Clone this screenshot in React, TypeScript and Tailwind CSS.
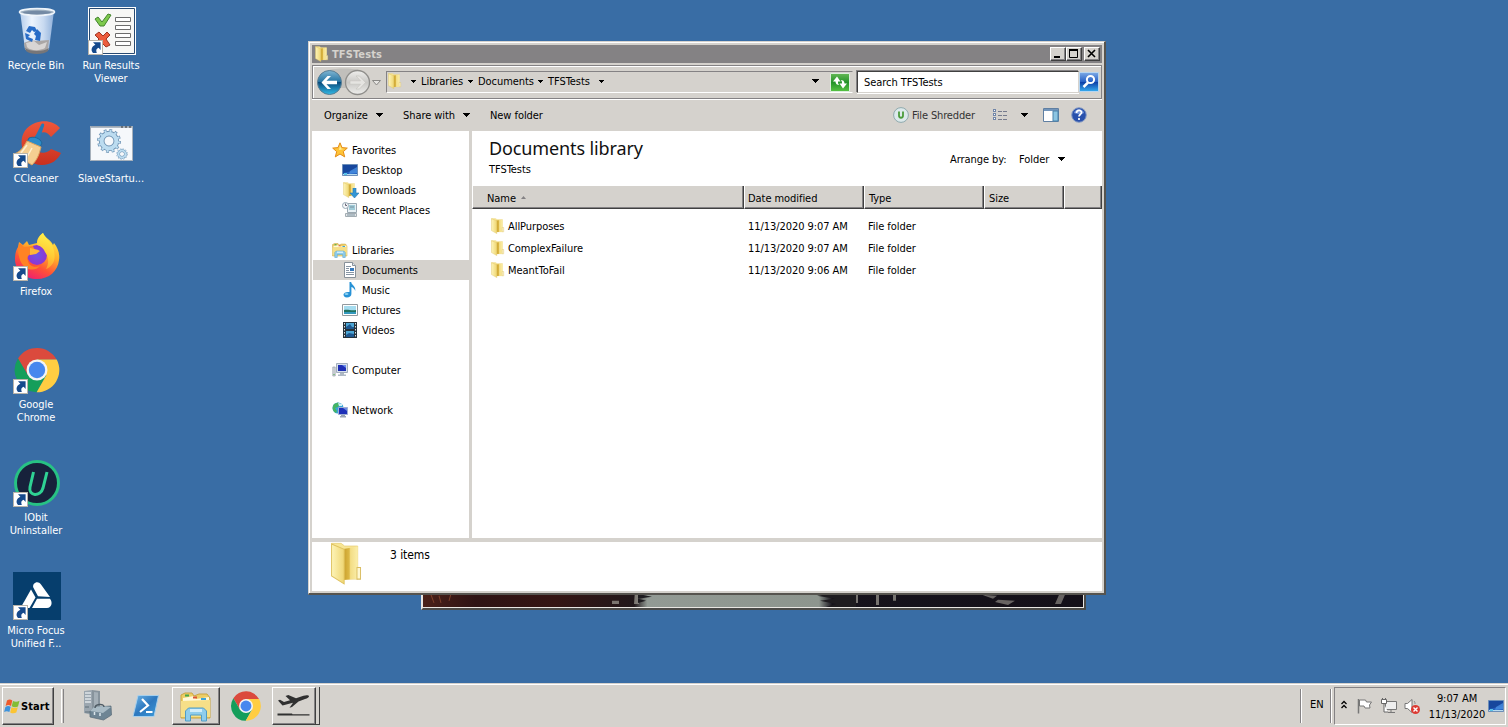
import React from "react";

type P = { className?: string };

const Caret = ({ className = "" }: P) => (
  <svg viewBox="0 0 7 4" className={"shrink-0 " + className} shapeRendering="crispEdges">
    <path d="M0 0h7L3.5 4z" fill="#000" />
  </svg>
);

const Shortcut = () => (
  <svg viewBox="0 0 15 15" className="absolute bottom-0 left-0 size-[15px]">
    <rect x=".5" y=".5" width="14" height="14" fill="#fff" stroke="#b9b4aa" />
    <path d="M5 2.300h7.600v7.600L10.600 7.800C8.500 8.500 7.600 10.200 8.800 13H5C2.400 10 3.600 6.600 7.400 4.800z" fill="#164a8c" />
  </svg>
);

const Folder = ({ className = "size-4" }: P) => (
  <svg viewBox="0 0 16 16" preserveAspectRatio="none" className={"shrink-0 " + className}>
    <defs>
      <linearGradient id="fa" x1="0" x2="1" y1="0" y2="0"><stop offset="0" stopColor="#fdf4b8" /><stop offset="1" stopColor="#efd673" /></linearGradient>
      <linearGradient id="fb" x1="0" x2="1" y1="0" y2="0"><stop offset="0" stopColor="#c99f2c" /><stop offset=".4" stopColor="#dcb845" /><stop offset=".5" stopColor="#f3dd85" /><stop offset="1" stopColor="#fbeea9" /></linearGradient>
    </defs>
    <path d="M1.500.500h4L7 1.500h5.500v12.300H5z" fill="#f8e695" stroke="#e6cd76" strokeWidth=".3" />
    <path d="M6.500 2.600l6-.9v12l-6 .4z" fill="url(#fb)" />
    <path d="M1.500.700L6.800 2.700v12.900L1.500 12.600z" fill="url(#fa)" stroke="#dfc25f" strokeWidth=".4" />
    <path d="M12.200 9.500h1.500v4.300h-1.500z" fill="#fff8d0" stroke="#d9bd61" strokeWidth=".4" />
  </svg>
);

const RecycleBin = () => (
  <svg viewBox="0 0 48 48" className="size-12">
    <defs><linearGradient id="rb" x1="0" x2="1"><stop offset="0" stopColor="#b4cdec" /><stop offset=".35" stopColor="#edf4fd" /><stop offset=".7" stopColor="#c7d9f0" /><stop offset="1" stopColor="#8fb0da" /></linearGradient></defs>
    <path d="M7 4l5 38c4 5 20 5 24 0L41 4z" fill="url(#rb)" />
    <path d="M11 36c4-2 8-3 12-2l13-1-1 9c-4 5-19 5-23 0z" fill="#aaa6a5" />
    <path d="M13 36l8-2 5 4 8-3-2 6c-5 3-15 3-18-1z" fill="#d8d5d4" />
    <path d="M12 41c5 4 19 4 24 0l-1 3c-4 4-18 4-22 0z" fill="#777678" />
    <ellipse cx="24" cy="5" rx="17.500" ry="3.400" fill="#9caebf" stroke="#eef4fa" strokeWidth="1.600" />
    <ellipse cx="24" cy="5.600" rx="14" ry="1.800" fill="#748aa4" />
    <g fill="#286cc7"><path d="M13 24l3-5 6 1 2 4-3 1-2-2-2 3z" /><path d="M24 22l4 4-1 8-5-1 1-4-2-2z" /><path d="M12 26l5 2-2 2 5 2-1 3-6-3z" /></g>
  </svg>
);

const RunResults = () => (
  <svg viewBox="0 0 48 48" className="size-12">
    <rect x=".5" y=".5" width="47" height="47" fill="#f7f7f5" stroke="#fff" />
    <path d="M1.500 46.500V1.500h45v45z" fill="none" stroke="#284a72" />
    <path d="M7 12l3-2 4 5 6-8 3 1-7 11h-4z" fill="#7dc94c" stroke="#44842e" />
    <path d="M7 28l4-3 4 4 4-4 3 3-4 4 4 6-4 2-4-4-4 3-3-3 4-4z" fill="#ec5c3c" stroke="#9d3422" />
    <g fill="#fff" stroke="#6c6c6c"><path d="M27.500 10.500h15v4h-15zM27.500 18.500h15v4h-15zM27.500 26.500h15v4h-15zM27.500 34.500h15v4h-15z" /></g>
  </svg>
);

const CCleaner = () => (
  <svg viewBox="0 0 48 48" className="size-12">
    <defs><linearGradient id="cc" x1="0" x2="0" y1="0" y2="1"><stop offset="0" stopColor="#f0573a" /><stop offset="1" stopColor="#c8301f" /></linearGradient></defs>
    <path d="M47 8C41 1 31-.5 22 3 12 7 7 16 9 27c1 10 9 18 20 18 9 0 16-5 19-12l-10-4c-4 5-12 5-16 0-4-6-2-14 5-16 5-2 8 0 11 4z" fill="url(#cc)" />
    <path d="M28 5c1-2 4-2 3 1l-5 15-5-2z" fill="#2878b5" />
    <path d="M16 18c5-2 11 0 13 5l-2 4-13-5z" fill="#2d8bc8" stroke="#1e6799" />
    <path d="M14 21l14 6c-2 8-4 13-9 18L1 34c6-2 9-6 13-13z" fill="#f5ce91" stroke="#dda45e" />
    <path d="M8 33l6-8M14 37l5-9" stroke="#fff0cf" strokeWidth="1.500" />
  </svg>
);

const Gear = ({ x, y, s }: { x: number; y: number; s: number }) => (
  <g transform={`translate(${x} ${y}) scale(${s})`}>
    <circle r="10" fill="none" stroke="#6e93b4" strokeWidth="4.400" strokeDasharray="2.618 2.618" />
    <circle r="7.500" fill="none" stroke="#6a8fb0" strokeWidth="5.800" />
    <circle r="7.500" fill="none" stroke="#bcdcf0" strokeWidth="4" />
    <circle r="10" fill="none" stroke="#bcdcf0" strokeWidth="2.800" strokeDasharray="1.900 3.336" strokeDashoffset="-.36" />
  </g>
);

const Script = () => (
  <svg viewBox="0 0 48 48" className="size-12">
    <rect x="2.500" y="6.500" width="42" height="34" fill="#f6f8fb" stroke="#a6b0bb" />
    <path d="M3 7h41" stroke="#98a4b0" strokeWidth="1.500" />
    <path d="M33 7h2M37 7h2M41 7h2" stroke="#333" />
    <Gear x={21} y={21} s={0.980} />
    <Gear x={34} y={34} s={0.460} />
  </svg>
);

const Firefox = () => (
  <svg viewBox="0 0 48 48" className="size-12">
    <defs>
      <linearGradient id="ff" x1=".8" x2=".3" y1="0" y2="1"><stop offset="0" stopColor="#fff04a" /><stop offset=".4" stopColor="#ffae2b" /><stop offset=".7" stopColor="#ff5336" /><stop offset="1" stopColor="#ef1c72" /></linearGradient>
      <linearGradient id="fy" x1=".6" x2=".4" y1="0" y2="1"><stop offset="0" stopColor="#fff34c" /><stop offset=".6" stopColor="#ffc934" /><stop offset="1" stopColor="#ff9a2e" /></linearGradient>
      <radialGradient id="fp"><stop offset="0" stopColor="#6a55e8" /><stop offset="1" stopColor="#9035d0" /></radialGradient>
    </defs>
    <path d="M24 10c0-5 3-8 6-10 2 5 8 7 10 12l1-2c4 5 6 11 5 17-1 11-10 19-22 19S2 38 2 26c0-5 1-9 3-12l1-5 4 3 4-4 2 4z" fill="url(#ff)" />
    <circle cx="24" cy="22" r="10" fill="url(#fp)" />
    <path d="M7 10l4 4 9-1c1 3 2 4 5 5l-1 2-8 2c-2 2-2 4-1 6 1 5 7 7 12 5-6 7-17 3-20-6-2-6-3-12 0-17z" fill="#ff8324" />
    <path d="M17 15c3 1 7 1 10 3l-4 3-6 1z" fill="#ffb637" />
    <path d="M24 12c0-5 2-9 6-12 2 6 10 9 11 18 2 9-1 15-8 18 3-5 3-12-1-17-1-3-4-6-8-7z" fill="url(#fy)" />
  </svg>
);

const Chrome = ({ className = "size-12" }: P) => (
  <svg viewBox="0 0 48 48" className={className}>
    <g transform="translate(24 24)">
      <path d="M0-10.500H19.500A22.300 22.300 0 0 0-19-11.600L-9.100 5.200z" fill="#db4a3d" />
      <path d="M-9.100 5.200L-19-11.600A22.300 22.300 0 0 0-.4 22.300L9.500 5z" fill="#159e5b" />
      <path d="M0-10.500H19.700A22.300 22.300 0 0 1-.4 22.300L9.300 5.300z" fill="#ffcd42" />
      <circle r="10.500" fill="#f4f4f4" /><circle r="8.200" fill="#4787ee" />
    </g>
  </svg>
);

const IObit = () => (
  <svg viewBox="0 0 48 48" className="size-12">
    <circle cx="24" cy="24" r="21.500" fill="#17223b" stroke="#27c284" strokeWidth="3" />
    <path d="M20.500 13L17 28C15 37.500 27.500 38 30 29L34 13" fill="none" stroke="#2fd394" strokeWidth="3" />
  </svg>
);

const MicroFocus = () => (
  <svg viewBox="0 0 48 48" className="size-12">
    <path fill="#063e6d" d="M0 0h48v48H0z" />
    <path d="M20.300 15.500c-1.300-4.500 4.700-7.500 7.700-3L37 25l-12-.8z" fill="#fff" />
    <path d="M18 17.500L22.500 25.500L16.500 36H7.500z" fill="#fff" />
    <path d="M24 26.800h13c3 3.700 1.500 9.200-3 9.200H19z" fill="#fff" />
  </svg>
);

const Star = () => <svg viewBox="0 0 16 16" className="size-4"><path d="M8 .8l2 4.800 5.300.5-4 3.500 1.400 5.300L8 12l-4.700 2.900 1.400-5.300-4-3.500L6 5.600z" fill="#ffc437" stroke="#e38c18" /><path d="M8 3l1 3.500 3 .4-5 1z" fill="#fff09a" /></svg>;
const DesktopIc = ({ className = "size-4" }: P) => <svg viewBox="0 0 16 16" className={className}><path d="M.5 2.500h15v11H.500z" fill="#2560bd" stroke="#6d8fb8" /><path d="M1 3h14v5L1 11z" fill="#17479d" /><path d="M8 9l7-4v6l-8 1z" fill="#488ee1" opacity=".8" /><path d="M1 12.500h14" stroke="#b9dbef" /><path d="M2 11h3v2H2z" fill="#59c2e8" /></svg>;
const Downloads = () => <div className="relative size-4"><Folder /><svg viewBox="0 0 9 10" className="absolute -right-px bottom-0 h-[10px] w-[9px]"><path d="M3 0h3v5h3L4.500 10 0 5h3z" fill="#3296d6" stroke="#2878b5" strokeWidth=".6" /></svg></div>;
const Recent = () => <svg viewBox="0 0 16 16" className="size-4"><path d="M5.500 1.500h9v9h-9z" fill="#e8f1f5" stroke="#9aa8b1" /><path d="M7 3h6v5H7z" fill="#9fcbd8" /><path d="M3.500 11.500h11v3h-11z" fill="#e4e6e7" stroke="#a3adb3" /><path d="M5 13h8M8 5h4" stroke="#7891a0" /><circle cx="3.500" cy="3.500" r="3" fill="#f4f6f8" stroke="#9aabb8" /><path d="M3.500 1.500v2H5" stroke="#667" fill="none" /></svg>;
const Libraries = ({ className = "size-4" }: P) => (
  <svg viewBox="0 0 32 32" className={className}>
    <path d="M1 5l4-2h7l2 3 5-2h8l3 4v20H1z" fill="#eccd65" stroke="#c9a543" />
    <path d="M3 8l11-2 2 3 13-2v4H3z" fill="#fff8d8" />
    <path d="M5 4.500h4v2H5z" fill="#43a64b" /><path d="M13 6.500h4v2h-4z" fill="#d95436" /><path d="M21 8h5v2h-5z" fill="#3da5d9" />
    <path d="M1 11l29-1v17H1z" fill="#f6df88" />
    <path d="M5.500 31V21l3-3h15l3 3v10h-5v-6h-11v6z" fill="#8fcdec" stroke="#519dc6" /><path d="M10 19h12v3H10z" fill="#d1edfa" />
  </svg>
);
const Doc = () => <svg viewBox="0 0 16 16" className="size-4"><path d="M2.500.5h8l3 3v12h-11z" fill="#fff" stroke="#889199" /><path d="M10.500.5v3h3" fill="#dfe8ef" stroke="#889199" /><path d="M4 4.500h5M4 6.500h3M4 8.500h3M4 10.500h8M4 12.500h8" stroke="#8795a3" /><path d="M8 6h4v3H8z" fill="#3779bb" /></svg>;
const Music = () => <svg viewBox="0 0 16 16" className="size-4"><path d="M7.500 0h1.700c0 3 5 4 4 9-.6-2-2-3.500-3.800-4v7c0 2-2 3.500-4.500 3.500S1.500 14 1.500 12.500 4 9.500 7.500 10z" fill="#2792d6" /><ellipse cx="4.500" cy="12" rx="2" ry="1" fill="#8dd2f2" /></svg>;
const Pictures = () => <svg viewBox="0 0 16 16" className="size-4"><path d="M.5 2.500h15v11H.500z" fill="#fff" stroke="#929a9f" /><path d="M2 4h12v8H2z" fill="#a5dcef" /><path d="M2 8c4-1 7 1 12 0v3H2z" fill="#20715f" /><path d="M2 10h12v2H2z" fill="#3399bd" /></svg>;
const Videos = () => <svg viewBox="0 0 16 16" className="size-4"><path d="M1 0h14v16H1z" fill="#25323b" /><path d="M4 1h8v6H4zM4 9h8v6H4z" fill="#4ba6d6" /><path d="M4 5l4-3 2 3h2v2H4zM4 13l3-2 5 1v3H4z" fill="#1e5890" /><path d="M2.500 1v14M13.500 1v14" stroke="#dce2e5" strokeDasharray="1.500 1.500" /></svg>;
const Computer = () => <svg viewBox="0 0 16 16" className="size-4"><path d="M4.500 1.500h11v9h-11z" fill="#d7e0ec" stroke="#a2adbc" /><path d="M6 3h8v6H6z" fill="#1f2fb5" /><path d="M10 3h4v3z" fill="#6b8dec" /><path d="M8 11h4v1.500h2V14H6v-1.500h2z" fill="#afb9c5" /><path d="M.8 5h2.400v9H.8z" fill="#d2d6dc" stroke="#8b929c" strokeWidth=".6" /><path d="M1.500 12h1v1h-1z" fill="#4ab446" /></svg>;
const Network = () => <svg viewBox="0 0 16 16" className="size-4"><circle cx="6" cy="6" r="5.500" fill="#36a4d8" /><path d="M2 2l4-1.500L8 2 6 5 3 6 5 9l-1 2C0 9 0 5 2 2z" fill="#45b463" /><path d="M6 1l4 1v2H7z" fill="#d4f0f5" /><path d="M6.500 5.500h9v7h-9z" fill="#1d30b8" stroke="#9faed2" /><path d="M11 6h4v3z" fill="#698ae4" /><path d="M9 13h4v1h1v1.500H8V14h1z" fill="#9aa5b4" /></svg>;

const ServerManager = () => (
  <svg viewBox="0 0 32 32" className="size-8">
    <path d="M2 1l8-1v25l-8-2z" fill="#9ba6af" /><path d="M10 0l8 1v23l-8 2z" fill="#87939c" /><path d="M12 2l4 .5v19l-4 1z" fill="#a4afb7" />
    <path d="M3 3h6M3 6h6M3 9h6M3 12h6" stroke="#dfe5e9" strokeWidth="1.400" /><path d="M3 17h4M3 22h5" stroke="#5f6e79" />
    <path d="M8 21l6-4 15-1 .5 9-8 5L8 27z" fill="#6e8594" stroke="#586a77" strokeWidth=".7" /><path d="M8 21l13 2 8-6-9-1-8 1z" fill="#a9bbc5" />
    <path d="M13 18c0-4 9-5 9-1" fill="none" stroke="#4f5c65" strokeWidth="1.500" /><path d="M12.500 22v3M18 23v3" stroke="#dce6eb" strokeWidth="1.500" />
  </svg>
);
const PowerShell = () => (
  <svg viewBox="0 0 28 24" className="h-6 w-7">
    <defs><linearGradient id="ps" x1="0" x2="1" y1="0" y2="1"><stop offset="0" stopColor="#6eb5e7" /><stop offset=".5" stopColor="#2d78bf" /><stop offset="1" stopColor="#3d9bd9" /></linearGradient></defs>
    <path d="M6 1.500h20.500L22 22.500H1z" fill="url(#ps)" stroke="#a6cfec" strokeLinejoin="round" />
    <path d="M10 5l6 6.500L8 18M14 18h6.500" fill="none" stroke="#fff" strokeWidth="2.200" />
  </svg>
);
const Plane = () => (
  <svg viewBox="0 0 34 26" className="h-[26px] w-[34px]" fill="#303030">
    <path d="M1 7.500l2-.7 4 2.200 6-1.800L8.500 3l2.800-1L19 5.300l7.500-2.500c3-1 5.500-.5 5.500.5s-1.500 2-4 2.800L21.500 8.500 15 14l-2.500.7 3.500-5L5.500 12.500z" />
    <path d="M.5 20.500h14.500l.5.800h17v1.200H.5z" />
  </svg>
);
const WinFlag = () => (
  <svg viewBox="0 0 16 15" className="h-[15px] w-4 shrink-0">
    <path d="M3 1.500c2-1.300 3.500-1.300 5.300 0L7 7C5 5.700 3.600 5.800 1.600 7z" fill="#ee5a2b" /><path d="M9 2c2 1 4.500 1 6.500-.3L14 7.400c-2 1-4 1-6.300-.1z" fill="#83bd35" />
    <path d="M1.400 7.900c2-1.300 3.500-1.300 5.300-.1l-1.300 5.300c-2-1.200-3.400-1.200-5.300 0z" fill="#3e93dc" /><path d="M7.500 8.200c2 1 4.300 1 6.300 0l-1.500 5.300c-2 1-4 1-6.100-.1z" fill="#fbc433" />
  </svg>
);

const Desk = ({ icon, label, shortcut = true }: { icon: React.ReactNode; label: string[]; shortcut?: boolean }) => (
  <div className="flex h-[113px] w-[74px] flex-col items-center pt-[7px]">
    <div className="relative size-12">{icon}{shortcut && <Shortcut />}</div>
    <div className="mt-[4px] mr-[2px] flex flex-col items-center leading-[13px] whitespace-nowrap text-white">
      {label.map((l) => <span key={l}>{l}</span>)}
    </div>
  </div>
);

const Nav = ({ icon, text, sub, active }: { icon: React.ReactNode; text: string; sub?: boolean; active?: boolean }) => (
  <div className={"ml-px flex h-5 items-center gap-1 " + (sub ? "pl-[29px] " : "pl-[19px] ") + (active ? "bg-[#d5d2cd]" : "")}>
    {icon}<span>{text}</span>
  </div>
);

const Col = ({ w, children }: { w: string; children?: React.ReactNode }) => (
  <div className={"flex h-[23px] items-center border-r border-b border-l border-r-[#404040] border-b-[#404040] border-l-white bg-[#d5d2cd] pt-[2px] shadow-[inset_-1px_-1px_0_#848284] " + w}>{children}</div>
);

const Row = ({ name, date }: { name: string; date: string }) => (
  <div className="flex h-[22px] items-center pl-[18px]">
    <Folder className="-mt-px size-4" /><span className="ml-[2px] w-[240px]">{name}</span><span className="w-[120px]">{date}</span><span>File folder</span>
  </div>
);

const WinBtn = ({ children }: { children: React.ReactNode }) => (
  <div className="flex h-[14px] w-4 items-center justify-center border border-t-white border-r-[#404040] border-b-[#404040] border-l-white bg-[#d5d2cd] shadow-[inset_-1px_-1px_0_#848284]">{children}</div>
);

const raised = "border border-t-white border-r-[#404040] border-b-[#404040] border-l-white bg-[#d5d2cd] shadow-[inset_-1px_-1px_0_#848284] ";

export default function App() {
  return (
    <div className="relative flex h-[727px] w-[1508px] flex-col overflow-hidden bg-[#396da5] font-['Tahoma','DejaVu_Sans_Condensed','DejaVu_Sans',sans-serif] text-[11px] leading-[13px] tracking-[-0.06px] whitespace-nowrap text-black font-stretch-condensed">
      <div className="grid h-[683px] grid-flow-col grid-cols-[74px_74px] grid-rows-[repeat(6,113px)] justify-start overflow-hidden">
        <Desk icon={<RecycleBin />} label={["Recycle Bin"]} shortcut={false} />
        <Desk icon={<CCleaner />} label={["CCleaner"]} />
        <Desk icon={<Firefox />} label={["Firefox"]} />
        <Desk icon={<Chrome />} label={["Google", "Chrome"]} />
        <Desk icon={<IObit />} label={["IObit", "Uninstaller"]} />
        <Desk icon={<MicroFocus />} label={["Micro Focus", "Unified F..."]} />
        <div className="translate-x-px"><Desk icon={<RunResults />} label={["Run Results", "Viewer"]} /></div>
        <div className="translate-x-px"><Desk icon={<Script />} label={["SlaveStartu..."]} shortcut={false} /></div>
      </div>

      <div className="absolute top-[560px] left-[421px] h-[50px] w-[665px] border-r-2 border-b-2 border-l-2 border-[#4a4a48] border-l-[#e8e6e2] bg-[#e8e6e2] pr-px pb-px">
        <svg viewBox="0 0 660 46" preserveAspectRatio="none" className="size-full">
          <defs>
            <linearGradient id="ph" x1="0" x2="1"><stop offset="0" stopColor="#4a2119" /><stop offset=".08" stopColor="#2e1314" /><stop offset=".2" stopColor="#351513" /><stop offset=".32" stopColor="#21181b" /><stop offset=".34" stopColor="#929a94" /><stop offset=".6" stopColor="#8d958e" /><stop offset=".62" stopColor="#16131c" /><stop offset="1" stopColor="#141019" /></linearGradient>
          </defs>
          <path d="M0 0h660v46H0z" fill="url(#ph)" />
          <path d="M212 30h4v13h-5zM189 40h7v3h-7zM433 32h2v10h-3zM453 32h3v12h-3zM470 32h3v8h-3z" fill="#98958e" opacity=".75" />
          <path d="M215 32h16l-12 2 10 2-14 2 8 2-8 2zM404 30h-8l12 3-14 2 18 3-15 2 16 3-10 3h30V30z" fill="#1e1c20" />
          <path d="M8 34l3 8M16 35l2 7M28 33l-2 7" stroke="#8b4930" strokeWidth="1" opacity=".8" />
          <path d="M559 34l15 1-4 3zM575 39l17 1-7 4-13-3zM636 34h6l-4 9h-6z" fill="#686463" />
        </svg>
      </div>

      <div className="absolute top-[41px] left-[308px] flex h-[554px] w-[798px] flex-col border-t border-r-2 border-b-2 border-l border-t-[#d5d2cd] border-r-[#56544f] border-b-[#56544f] border-l-[#d5d2cd] bg-[#d5d2cd]">
        <div className="flex h-full flex-col border-t border-l border-white p-[2px]">
          <div className="flex h-[18px] shrink-0 items-center bg-[#848284] pr-[2px] pl-[2px]">
            <Folder /><span className="ml-[2px] flex-1 font-bold tracking-[0.1px] text-[#d5d2cd]">TFSTests</span>
            <WinBtn><svg viewBox="0 0 12 10" className="h-[10px] w-3"><path d="M2 7h6v2H2z" /></svg></WinBtn>
            <WinBtn><svg viewBox="0 0 12 10" className="h-[10px] w-3"><path d="M1.500.500h8v8h-8z" fill="none" stroke="#000" /><path d="M1 0h9v2H1z" /></svg></WinBtn>
            <div className="ml-[2px]"><WinBtn><svg viewBox="0 0 12 10" className="h-[10px] w-3"><path d="M2 1l7 7M9 1L2 8" stroke="#000" strokeWidth="1.600" /></svg></WinBtn></div>
          </div>

          <div className="mt-[2px] flex h-[34px] shrink-0 items-center border border-[#848284] shadow-[0_1px_0_#fff,inset_0_1px_0_#fff,inset_1px_0_0_#fff]">
            <svg viewBox="0 0 72 30" className="ml-[2px] h-[30px] w-[72px] shrink-0">
              <defs><linearGradient id="bk" x1="0" x2="0" y1="0" y2="1"><stop offset="0" stopColor="#7fb5d2" /><stop offset=".48" stopColor="#2273a3" /><stop offset=".5" stopColor="#0b4c7d" /><stop offset="1" stopColor="#31b9e6" /></linearGradient>
                <linearGradient id="fw" x1="0" x2="0" y1="0" y2="1"><stop offset="0" stopColor="#efefed" /><stop offset=".5" stopColor="#c9c8c5" /><stop offset="1" stopColor="#eeeeec" /></linearGradient></defs>
              <path d="M14 3c8-2 22-2 30 0l10 6-4 12H14z" fill="#c1bfbb" />
              <circle cx="14.500" cy="15.500" r="12" fill="url(#bk)" stroke="#587d93" />
              <path d="M12.500 9h3.500l-4.500 4.800H22v3.400H11.500L16 22h-3.500L6.500 15.500z" fill="#fff" />
              <circle cx="42.500" cy="15.500" r="12" fill="url(#fw)" stroke="#8f8e8b" strokeWidth="1.300" />
              <path d="M44.500 9H41l4.500 4.800H35v3.400h10.500L41 22h3.500l6-6.500z" fill="#e5e4e1" stroke="#c4c2be" strokeWidth=".6" />
              <path d="M57.500 13.500h8l-4 4.500z" fill="#e6e5e2" stroke="#8a8986" />
            </svg>
            <div className="-ml-px flex h-[22px] w-[467px] shrink-0 items-center border border-t-[#848284] border-r-[#d5d2cd] border-b-white border-l-[#848284] pb-[2px]">
              <Folder className="size-4" />
              <Caret className="ml-[8px] h-[3px] w-[5px]" /><span className="ml-[5px] w-[42px]">Libraries</span>
              <Caret className="ml-[5px] h-[3px] w-[5px]" /><span className="ml-[5px] w-[55px]">Documents</span>
              <Caret className="ml-[5px] h-[3px] w-[5px]" /><span className="ml-[5px] w-[46px]">TFSTests</span>
              <Caret className="ml-[5px] h-[3px] w-[5px]" />
              <Caret className="mr-[33px] ml-auto h-[4px] w-[7px]" />
            </div>
            <svg viewBox="0 0 20 19" className="-ml-[23px] h-[19px] w-5 shrink-0">
              <defs><linearGradient id="rg" x1="0" x2="0" y1="0" y2="1"><stop offset="0" stopColor="#65b956" /><stop offset=".5" stopColor="#239329" /><stop offset="1" stopColor="#58c443" /></linearGradient></defs>
              <path d="M.5.500h19v18H.500z" fill="url(#rg)" stroke="#dceedd" />
              <path d="M7 3.500L3 8.500h2.500c0 2.500 1.500 3.500 4 3.500-1.500-1-1.500-2-1.500-3.500h2.500zM13 15.500l4-5h-2.500C14.500 8 13 7 10.500 7c1.500 1 1.500 2 1.500 3.500H9.500z" fill="#fff" />
            </svg>
            <div className="ml-[7px] flex h-[22px] w-[222px] shrink-0 items-center border border-t-[#404040] border-r-[#d5d2cd] border-b-[#d5d2cd] border-l-[#404040] bg-white pl-[6px] shadow-[0_1px_0_#fff,-1px_-1px_0_#848284]">Search TFSTests</div>
            <svg viewBox="0 0 20 20" className="size-5 shrink-0">
              <defs><linearGradient id="sg" x1="0" x2="0" y1="0" y2="1"><stop offset="0" stopColor="#7daae6" /><stop offset=".48" stopColor="#2760c5" /><stop offset=".5" stopColor="#0c3ca5" /><stop offset="1" stopColor="#37adf0" /></linearGradient></defs>
              <path d="M.5.500h19v19H.500z" fill="url(#sg)" stroke="#b7d5f0" />
              <circle cx="11.500" cy="7.500" r="3.600" fill="none" stroke="#fff" strokeWidth="2" /><path d="M9 10.500L4.500 15" stroke="#fff" strokeWidth="2.500" />
            </svg>
          </div>

          <div className="flex h-8 shrink-0 items-center pl-[12px]">
            <span className="w-[52px]">Organize</span><Caret className="h-[4px] w-[7px]" />
            <span className="ml-5 w-[60px]">Share with</span><Caret className="h-[4px] w-[7px]" />
            <span className="ml-5">New folder</span>
            <div className="mr-[15px] ml-auto flex items-center">
              <svg viewBox="0 0 16 16" className="size-4"><circle cx="8" cy="8" r="7.400" fill="#dce9eb" stroke="#8fa9ad" /><path d="M6 4.500v4c0 3 4 3 4 0v-4" fill="none" stroke="#4b9b3b" strokeWidth="1.800" /></svg>
              <span className="mt-px ml-[3px] w-[80px] tracking-[-0.15px] text-[#333]">File Shredder</span>
              <svg viewBox="0 0 16 12" className="h-3 w-4" shapeRendering="crispEdges"><path d="M1.500.500h2v2h-2zM1.500 4.500h2v2h-2zM1.500 8.500h2v2h-2z" fill="#fff" stroke="#7186a8" /><path d="M6 2h4M11 2h4M6 6h4M11 6h4M6 10h4M11 10h4" stroke="#757b8c" /></svg>
              <Caret className="ml-[13px] h-[4px] w-[7px]" />
              <svg viewBox="0 0 16 14" className="ml-[15px] h-[14px] w-4"><path d="M.5.500h15v13H.500z" fill="#fff" stroke="#5f7fa2" /><path d="M1 1h14v2H1z" fill="#7295bb" /><path d="M10 3h5v10h-5z" fill="#8cc5e2" stroke="#4b82aa" /></svg>
              <svg viewBox="0 0 16 16" className="ml-[12px] size-4"><circle cx="8" cy="8" r="7.300" fill="#2951ac" stroke="#879cc4" /><path d="M3 6c1-5 9-5 10 0-3 2-7 1-10 0z" fill="#7596db" /><path d="M5.500 6c0-3.500 5-3.500 5-.5 0 2-2.500 2-2.500 4M8 11v2" fill="none" stroke="#fff" strokeWidth="1.700" /></svg>
            </div>
          </div>

          <div className="flex h-[407px] shrink-0">
            <div className="mr-[3px] w-[157px] bg-white pt-[9px]">
              <Nav icon={<Star />} text="Favorites" />
              <Nav icon={<DesktopIc />} text="Desktop" sub />
              <Nav icon={<Downloads />} text="Downloads" sub />
              <Nav icon={<Recent />} text="Recent Places" sub />
              <div className="h-5" />
              <Nav icon={<Libraries />} text="Libraries" />
              <Nav icon={<Doc />} text="Documents" sub active />
              <Nav icon={<Music />} text="Music" sub />
              <Nav icon={<Pictures />} text="Pictures" sub />
              <Nav icon={<Videos />} text="Videos" sub />
              <div className="h-5" />
              <Nav icon={<Computer />} text="Computer" />
              <div className="h-5" />
              <Nav icon={<Network />} text="Network" />
            </div>
            <div className="flex flex-1 flex-col bg-white">
              <div className="flex h-[55px] justify-between pl-[17px]">
                <div className="pt-[5px]">
                  <div className="font-['Noto_Sans',sans-serif] text-[18px] leading-6 tracking-[-0.12px] font-stretch-normal text-[#111]">Documents library</div>
                  <div className="mt-[3px]">TFSTests</div>
                </div>
                <div className="mt-[21px] mr-[37px] flex h-[13px] items-center"><span className="mt-px w-[69px]">Arrange by:</span><span className="mt-px w-[39px]">Folder</span><Caret className="h-[4px] w-[7px]" /></div>
              </div>
              <div className="flex">
                <Col w="w-[272px] pl-[14px]">Name<svg viewBox="0 0 5 3" className="mb-[2px] ml-[5px] h-[3px] w-[5px]"><path d="M0 3h5L2.500 0z" fill="#848284" /></svg></Col>
                <Col w="w-[120px] pl-[3px]">Date modified</Col>
                <Col w="w-[120px] pl-[4px]">Type</Col>
                <Col w="w-[80px] pl-[4px]">Size</Col>
                <Col w="w-[38px]" />
              </div>
              <div className="mt-[6px]">
                <Row name="AllPurposes" date="11/13/2020 9:07 AM" />
                <Row name="ComplexFailure" date="11/13/2020 9:07 AM" />
                <Row name="MeantToFail" date="11/13/2020 9:06 AM" />
              </div>
            </div>
          </div>
          <div className="mt-[4px] flex h-[49px] shrink-0 bg-white pl-[16px]">
            <Folder className="h-[43px] w-[38px]" />
            <span className="mt-[5px] ml-[24px] pt-px text-[12px] leading-[15px]">3 items</span>
          </div>
        </div>
      </div>

      <div className="z-10 flex h-11 shrink-0 items-center border-t border-[#d5d2cd] bg-[#d5d2cd] shadow-[inset_0_1px_0_#fff]">
        <div className={raised + "mt-px ml-[2px] flex h-[38px] w-[52px] items-center pl-px font-bold"}><WinFlag /><span className="ml-px tracking-[0.1px]">Start</span></div>
        <div className="ml-[7px] h-[34px] w-[3px] border-r border-l border-r-[#848284] border-l-white" />
        <div className="ml-[18px]"><ServerManager /></div>
        <div className="ml-[18px]"><PowerShell /></div>
        <div className={raised + "mt-px ml-[12px] flex h-[38px] w-12 items-center justify-center"}><Libraries className="size-8" /></div>
        <div className="ml-[10px]"><Chrome className="size-8" /></div>
        <div className={raised + "mt-px ml-[10px] flex h-[38px] w-[44px] items-center justify-center"}><Plane /></div>
        <div className="mt-px h-[38px] w-1 border-r border-b border-[#404040]" />
        <div className="ml-auto h-[34px] w-[2px] border-r border-l border-r-white border-l-[#848284]" />
        <span className="-mt-[3px] ml-[8px] w-[20px]">EN</span>
        <div className="h-[34px] w-[2px] border-r border-l border-r-white border-l-[#848284]" />
        <div className="mt-px mr-[2px] ml-[2px] flex h-[38px] w-[172px] items-center border border-t-[#848284] border-r-white border-b-white border-l-[#848284]">
          <svg viewBox="0 0 8 9" className="-mt-[4px] ml-[5px] h-[9px] w-[8px]" fill="none" stroke="#000" strokeWidth="1.300"><path d="M1.500 4L4 1.500 6.500 4M1.500 8L4 5.500 6.500 8" /></svg>
          <svg viewBox="0 0 16 16" className="ml-[9px] size-4"><path d="M1.500 1v14.500" stroke="#777" strokeWidth="1.500" /><path d="M2.500 2h6l1 2h5l-2 3 .5 3h-5l-1-2H2.500z" fill="#fff" stroke="#777" /></svg>
          <svg viewBox="0 0 16 16" className="ml-[8px] size-4"><path d="M4.500 3.500h11v8h-11z" fill="#eee" stroke="#777" /><path d="M7 14.500h7M10 12v2" stroke="#777" /><path d="M.5 1.500h5v4h-5zM3 6v8h4" fill="#fff" stroke="#666" /><path d="M1.500 0v2M4.500 0v2" stroke="#666" /></svg>
          <svg viewBox="0 0 16 16" className="ml-[7px] size-4"><path d="M1 5.500h2.500L8 1.500v13l-4.500-4H1z" fill="#fff" stroke="#777" /><path d="M10 3c1 1 1 2 1 3" stroke="#888" fill="none" /><circle cx="11.500" cy="11.500" r="4.500" fill="#dc3a32" /><path d="M9.500 9.500l4 4M13.500 9.500l-4 4" stroke="#fff" strokeWidth="1.400" /></svg>
          <div className="ml-[8px] flex w-[58px] flex-col items-center pt-px leading-4"><span>9:07 AM</span><span>11/13/2020</span></div>
          <DesktopIc className="ml-[2px] size-4" />
        </div>
      </div>
    </div>
  );
}
